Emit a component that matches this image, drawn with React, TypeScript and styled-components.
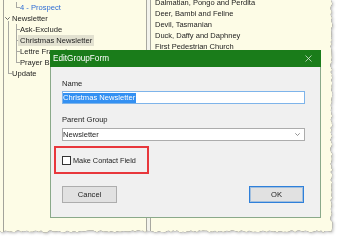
import React from 'react';
import styled, { createGlobalStyle } from 'styled-components';

const Global = createGlobalStyle`
  html, body { margin: 0; padding: 0; background: #ffffff; overflow: hidden; }
  body { font-family: "Liberation Sans", Arial, sans-serif; }
  #root { width: 342px; height: 243px; }
`;

function seeded(seed: number) {
  let s = seed;
  return () => {
    s = (s * 9301 + 49297) % 233280;
    return s / 233280;
  };
}

const tornEdge = (() => {
  const r = seeded(11);
  const pts: string[] = ['0px 0px', '331px 0px'];
  for (let y = 2; y < 230; y += 2) pts.push(`${(330.3 + r() * 2.2).toFixed(1)}px ${y}px`);
  pts.push('331.5px 231.5px');
  for (let x = 329; x > 0; x -= 2) pts.push(`${x}px ${(230.4 + r() * 2).toFixed(1)}px`);
  pts.push('0px 231px');
  return pts.join(', ');
})();

const Stage = styled.div`
  width: 342px;
  height: 243px;
  filter: drop-shadow(0.9px 0.9px 0 rgba(45, 45, 45, 0.9)) drop-shadow(1px 1.5px 1.5px rgba(0, 0, 0, 0.28));
`;

const Paper = styled.div`
  position: relative;
  width: 336px;
  height: 236px;
  box-sizing: border-box;
  padding-left: 3px;
  display: flex;
  background: #fdfce6;
  clip-path: polygon(${tornEdge});
`;

const AppWindow = styled.div`
  flex: 1;
  display: flex;
  border-left: 1px solid #a3a39a;
`;

const TreePane = styled.div`
  width: 142px;
  flex: none;
  padding-top: 2px;
  display: flex;
  flex-direction: column;
`;

const Splitter = styled.div`
  width: 3px;
  flex: none;
  border-left: 1px solid #a8a8a0;
  border-right: 1px solid #a8a8a0;
  background: #f3f3ec;
`;

const ListPane = styled.div`
  flex: 1;
  padding-left: 4px;
  margin-top: -3px;
  display: flex;
  flex-direction: column;
`;

const TreeRow = styled.div`
  display: flex;
  height: 11px;
  font-size: 7.6px;
  line-height: 11px;
  color: #1d1d1d;
  white-space: nowrap;
`;

type GuideKind = 'blank' | 'pass' | 'tee' | 'elbow' | 'expander';

const lineColor = '#a9a9a2';
const guideBg: Record<GuideKind, string> = {
  blank: 'none',
  pass: `linear-gradient(${lineColor}, ${lineColor}) 4px 0 / 1px 100% no-repeat`,
  tee: `linear-gradient(${lineColor}, ${lineColor}) 4px 0 / 1px 100% no-repeat, linear-gradient(${lineColor}, ${lineColor}) 4px 5px / 4px 1px no-repeat`,
  elbow: `linear-gradient(${lineColor}, ${lineColor}) 4px 0 / 1px 6px no-repeat, linear-gradient(${lineColor}, ${lineColor}) 4px 5px / 4px 1px no-repeat`,
  expander: `linear-gradient(${lineColor}, ${lineColor}) 4px 8px / 1px 3px no-repeat`,
};

const Guide = styled.span<{ $kind: GuideKind }>`
  width: 8px;
  flex: none;
  display: flex;
  align-items: flex-start;
  justify-content: center;
  background: ${p => guideBg[p.$kind]};
`;

const Chevron = styled.svg`
  margin-top: 4px;
  margin-left: -1px;
`;

const NodeLabel = styled.span<{ $selected?: boolean; $link?: boolean }>`
  margin-left: -2px;
  padding: 0 2px;
  color: ${p => (p.$link ? '#2f6dd5' : '#1d1d1d')};
  background: ${p => (p.$selected ? '#e2e1d0' : 'transparent')};
`;

const ListItem = styled.div`
  height: 11px;
  font-size: 7.5px;
  line-height: 11px;
  color: #1d1d1d;
  white-space: nowrap;
`;

const Dialog = styled.div`
  position: absolute;
  left: 50px;
  top: 50px;
  width: 271px;
  display: flex;
  flex-direction: column;
`;

const TitleBar = styled.div`
  height: 17px;
  display: flex;
  align-items: center;
  justify-content: space-between;
  padding: 0 9px 0 3px;
  background: #1a7c1a;
  color: #ffffff;
  font-size: 8.2px;
`;

const Body = styled.div`
  height: 151px;
  box-sizing: border-box;
  display: flex;
  flex-direction: column;
  padding: 0 15px 0 11px;
  background: #f0f0f0;
  border: 1px solid #8aa98a;
  border-top: none;
  font-size: 7.6px;
  color: #1d1d1d;
`;

const FieldLabel = styled.div<{ $gap: number }>`
  margin-top: ${p => p.$gap}px;
  height: 10px;
  line-height: 10px;
`;

const TextBox = styled.div<{ $gap: number; $focused?: boolean }>`
  margin-top: ${p => p.$gap}px;
  height: 13px;
  box-sizing: border-box;
  display: flex;
  align-items: center;
  justify-content: space-between;
  padding: 0 4px 0 0;
  background: #ffffff;
  border: 1px solid ${p => (p.$focused ? '#7eb4ea' : '#acacac')};
`;

const Selection = styled.span`
  height: 10px;
  line-height: 10px;
  background: #3390f2;
  color: #ffffff;
  padding-right: 1px;
`;

const PlainValue = styled.span`
  line-height: 10px;
`;

const Highlight = styled.div`
  margin-top: 5px;
  margin-left: -8px;
  width: 95px;
  height: 28px;
  box-sizing: border-box;
  border: 2px solid #e8373c;
  display: flex;
  align-items: center;
  padding-left: 6px;
`;

const CheckBox = styled.span`
  width: 9px;
  height: 9px;
  box-sizing: border-box;
  border: 1px solid #333333;
  background: #ffffff;
  flex: none;
`;

const CheckLabel = styled.span`
  margin-left: 2px;
  font-size: 7.3px;
`;

const ButtonRow = styled.div`
  margin-top: 12px;
  display: flex;
  justify-content: space-between;
  padding-right: 1px;
`;

const Button = styled.div<{ $default?: boolean }>`
  width: 55px;
  height: 17px;
  box-sizing: border-box;
  display: flex;
  align-items: center;
  justify-content: center;
  background: #e1e1e1;
  border: 1px solid ${p => (p.$default ? '#2f80da' : '#adadad')};
  box-shadow: ${p => (p.$default ? 'inset 0 0 0 1px rgba(47, 128, 218, 0.35)' : 'none')};
  font-size: 7.6px;
`;

type Node = { label: string; guides: GuideKind[]; selected?: boolean; link?: boolean };

const nodes: Node[] = [
  { label: '4 - Prospect', guides: ['blank', 'elbow'], link: true },
  { label: 'Newsletter', guides: ['expander'] },
  { label: 'Ask-Exclude', guides: ['pass', 'tee'] },
  { label: 'Christmas Newsletter', guides: ['pass', 'tee'], selected: true },
  { label: 'Lettre Français', guides: ['pass', 'tee'] },
  { label: 'Prayer Bulletin', guides: ['pass', 'elbow'] },
  { label: 'Update', guides: ['elbow'] },
];

const contacts = [
  'Dalmatian, Pongo and Perdita',
  'Deer, Bambi and Feline',
  'Devil, Tasmanian',
  'Duck, Daffy and Daphney',
  'First Pedestrian Church',
  'Flintstone, Fred and Wilma',
];

export default function App() {
  return (
    <>
      <Global />
      <Stage>
        <Paper>
          <AppWindow>
            <TreePane>
              {nodes.map(n => (
                <TreeRow key={n.label}>
                  {n.guides.map((g, i) => (
                    <Guide key={i} $kind={g}>
                      {g === 'expander' && (
                        <Chevron width="5" height="3" viewBox="0 0 5 3">
                          <path d="M0.3 0.3 L2.5 2.5 L4.7 0.3" fill="none" stroke="#555" strokeWidth="0.9" />
                        </Chevron>
                      )}
                    </Guide>
                  ))}
                  <NodeLabel $selected={n.selected} $link={n.link}>{n.label}</NodeLabel>
                </TreeRow>
              ))}
            </TreePane>
            <Splitter />
            <ListPane>
              {contacts.map(c => (
                <ListItem key={c}>{c}</ListItem>
              ))}
            </ListPane>
          </AppWindow>

          <Dialog>
            <TitleBar>
              <span>EditGroupForm</span>
              <svg width="7" height="7" viewBox="0 0 7 7">
                <path d="M0.5 0.5 L6.5 6.5 M6.5 0.5 L0.5 6.5" stroke="#d6e6d6" strokeWidth="0.8" />
              </svg>
            </TitleBar>
            <Body>
              <FieldLabel $gap={12}>Name</FieldLabel>
              <TextBox $gap={2} $focused>
                <Selection>Christmas Newsletter</Selection>
              </TextBox>
              <FieldLabel $gap={11}>Parent Group</FieldLabel>
              <TextBox $gap={3}>
                <PlainValue>Newsletter</PlainValue>
                <svg width="5" height="3" viewBox="0 0 5 3">
                  <path d="M0.3 0.3 L2.5 2.5 L4.7 0.3" fill="none" stroke="#777" strokeWidth="0.8" />
                </svg>
              </TextBox>
              <Highlight>
                <CheckBox />
                <CheckLabel>Make Contact Field</CheckLabel>
              </Highlight>
              <ButtonRow>
                <Button>Cancel</Button>
                <Button $default>OK</Button>
              </ButtonRow>
            </Body>
          </Dialog>
        </Paper>
      </Stage>
    </>
  );
}
